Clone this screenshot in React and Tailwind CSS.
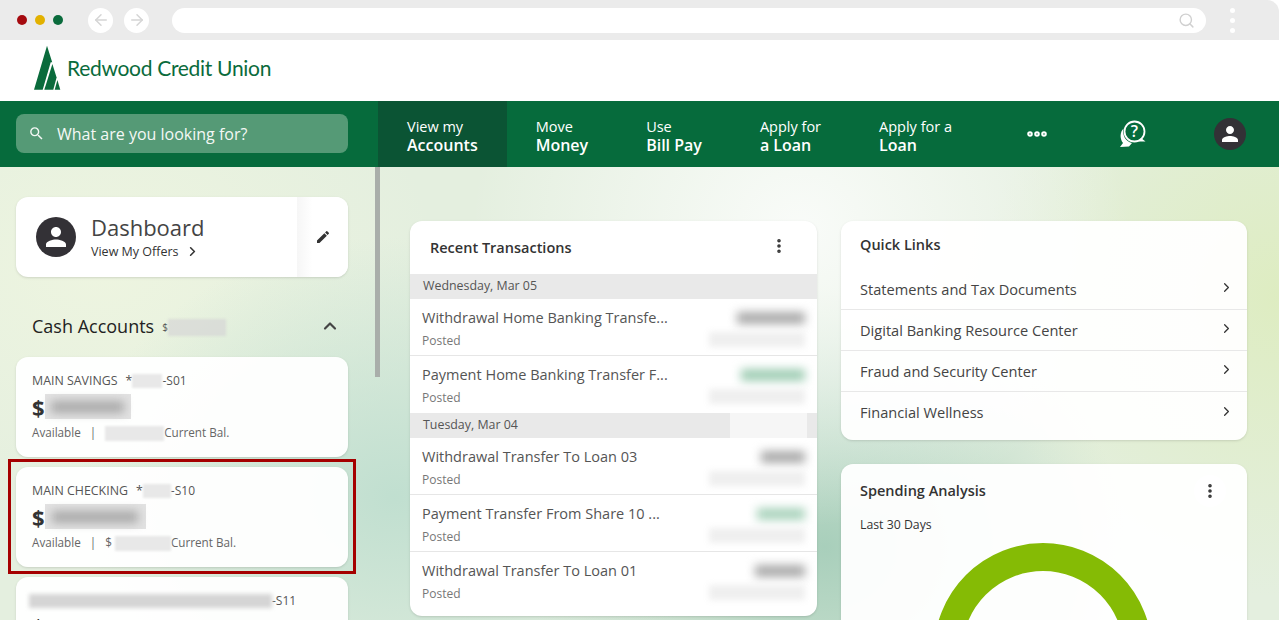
import { ArrowLeft, ArrowRight, ChevronRight, ChevronUp, EllipsisVertical, MoreHorizontal, Search } from "lucide-react";
import { MdPerson, MdSearch, MdEdit } from "react-icons/md";

const navItems = [
  { top: "View my", bottom: "Accounts", active: true },
  { top: "Move", bottom: "Money" },
  { top: "Use", bottom: "Bill Pay" },
  { top: "Apply for", bottom: "a Loan" },
  { top: "Apply for a", bottom: "Loan" },
];

const groups = [
  {
    date: "Wednesday, Mar 05",
    rows: [
      { name: "Withdrawal Home Banking Transfe...", w: "w-[68px]", color: "bg-[#aaaaaa]" },
      { name: "Payment Home Banking Transfer F...", w: "w-[64px]", color: "bg-[#9fcdb4]" },
    ],
  },
  {
    date: "Tuesday, Mar 04",
    rows: [
      { name: "Withdrawal Transfer To Loan 03", w: "w-[44px]", color: "bg-[#aaaaaa]" },
      { name: "Payment Transfer From Share 10 ...", w: "w-[48px]", color: "bg-[#a9d3bc]" },
      { name: "Withdrawal Transfer To Loan 01", w: "w-[50px]", color: "bg-[#aaaaaa]" },
    ],
  },
];

const quickLinks = [
  "Statements and Tax Documents",
  "Digital Banking Resource Center",
  "Fraud and Security Center",
  "Financial Wellness",
];

const Logo = () => (
  <svg width="28" height="46" viewBox="0 0 28 46" className="shrink-0">
    <path d="M14 0.7 L19.2 17.3 L17.7 17.3 L9.7 44.7 L1 44.7 Z" fill="#0a6b3c" />
    <path d="M11.3 44.7 L19.4 19 L23.6 32.5 L20.3 44.7 Z" fill="#0a6b3c" />
    <path d="M21.7 44.7 L24.4 35 L27.3 44.7 Z" fill="#0a6b3c" />
  </svg>
);

const HelpIcon = () => (
  <svg width="28" height="28" viewBox="0 0 28 28" fill="none">
    <circle cx="15.5" cy="11.5" r="10" stroke="white" strokeWidth="1.8" />
    <path d="M22 18 L26.5 21.5 L20 21.5 Z" fill="white" />
    <path d="M4.5 8.5 C3 15 6.5 21.5 13 23 L10 26.5 L1 27 L4 23 C0.5 18.5 1 12 4.5 8.5 Z" fill="white" />
    <text x="15.5" y="17" textAnchor="middle" fontSize="16" fontWeight="600" fill="white" fontFamily="Open Sans, sans-serif">?</text>
  </svg>
);

const AccountCard = ({ name, mask, suffix, amountW, dollar, curW, selected }) => (
  <div className={selected ? "-mx-2 border-[3px] border-[#a50000] px-[5px] pb-[4px] pt-[5px]" : ""}>
    <div className="h-[100px] rounded-xl bg-white/95 px-4 pt-4 shadow-sm">
      <div className="flex h-[16px] items-center text-[12.4px] leading-4 text-[#555]">
        <span>{name}</span>
        <span className="ml-[8px]">*</span>
        <div className={`h-[14px] ${mask} bg-[#e8e8e8] blur-[1px]`} />
        <span className="text-xs">-{suffix}</span>
      </div>
      <div className="mt-[5px] flex h-[25px] items-center">
        <span className="text-[22px] font-bold leading-6 text-[#333]">$</span>
        <div className={`flex h-[25px] ${amountW} items-center justify-center bg-[#e2e2e2]`}>
          <div className="h-[12px] w-[85%] bg-[#aaaaaa] blur-[5px]" />
        </div>
      </div>
      <div className="mt-[6px] flex h-[16px] items-center text-[11.7px] text-[#666]">
        <span>Available</span>
        <span className="mx-[9px]">|</span>
        {dollar && <span className="mr-[3px]">$</span>}
        <div className={`h-[15px] ${curW} bg-[#e8e8e8] blur-[1px]`} />
        <span>Current Bal.</span>
      </div>
    </div>
  </div>
);

const Kebab = ({ boxed }) => (
  <div className={`flex h-8 w-8 items-center justify-center rounded-full ${boxed ? "bg-white" : ""}`}>
    <EllipsisVertical size={18} strokeWidth={2.8} className="text-[#333]" />
  </div>
);

const App = () => {
  return (
    <div
      className="flex h-[620px] w-[1279px] flex-col overflow-hidden bg-white text-[#333]"
      style={{ fontFamily: '"Open Sans", sans-serif' }}
    >
      <div className="flex h-10 shrink-0 items-center rounded-tr-xl bg-[#ebebeb]">
        <div className="ml-[17px] flex gap-2">
          <span className="h-[10px] w-[10px] rounded-full bg-[#a50a0f]" />
          <span className="h-[10px] w-[10px] rounded-full bg-[#e2b100]" />
          <span className="h-[10px] w-[10px] rounded-full bg-[#0a6b3c]" />
        </div>
        <div className="ml-[25px] flex gap-[11px]">
          <div className="flex h-[25px] w-[25px] items-center justify-center rounded-full bg-white text-[#d5d5d5]">
            <ArrowLeft size={18} strokeWidth={2} />
          </div>
          <div className="flex h-[25px] w-[25px] items-center justify-center rounded-full bg-white text-[#d5d5d5]">
            <ArrowRight size={18} strokeWidth={2} />
          </div>
        </div>
        <div className="ml-[23px] flex h-[25px] w-[1034px] items-center justify-end rounded-full bg-white pr-[11px] text-[#d0d0d0]">
          <Search size={17} strokeWidth={2} />
        </div>
        <div className="ml-[24px] flex flex-col gap-[5px]">
          <span className="h-[5px] w-[5px] rounded-full bg-white" />
          <span className="h-[5px] w-[5px] rounded-full bg-white" />
          <span className="h-[5px] w-[5px] rounded-full bg-white" />
        </div>
      </div>

      <div className="flex h-[61px] shrink-0 items-center pb-[5px] pl-[33px]">
        <Logo />
        <span
          className="ml-[6px] text-[21px] leading-7 tracking-[-0.3px] text-[#0a6b3c]"
          style={{ fontFamily: "Lato, sans-serif" }}
        >
          Redwood Credit Union
        </span>
      </div>

      <div className="flex h-[66px] shrink-0 items-stretch bg-[#066b3c] text-white">
        <div className="flex w-[378px] shrink-0 items-center pb-[2px] pl-4">
          <div className="flex h-[39px] w-[332px] items-center rounded-lg bg-[#559a76] pl-[12px] text-[#f4f8f5]">
            <MdSearch size={17} />
            <span className="ml-[12px] pt-[1px] text-base">What are you looking for?</span>
          </div>
        </div>
        {navItems.map((item) => (
          <div
            key={item.bottom}
            className={`flex flex-col justify-center px-[29px] pt-[3px] ${item.active ? "bg-[#0b5434]" : ""}`}
          >
            <span className="text-[14.5px] leading-[18px]">{item.top}</span>
            <span className="text-base font-semibold leading-[18px]">{item.bottom}</span>
          </div>
        ))}
        <div className="ml-[14px] flex w-[84px] items-center justify-center">
          <MoreHorizontal size={24} strokeWidth={3.6} />
        </div>
        <div className="ml-[12px] flex w-[84px] items-center justify-center">
          <HelpIcon />
        </div>
        <div className="ml-[13px] flex w-[84px] items-center justify-center">
          <div className="flex h-8 w-8 items-center justify-center rounded-full bg-[#333136]">
            <MdPerson size={24} />
          </div>
        </div>
      </div>

      <div
        className="flex flex-1 overflow-hidden bg-[#e4efdf]"
        style={{
          backgroundImage:
            "radial-gradient(ellipse 330px 300px at 800px 60px, rgba(250,252,250,0.95), transparent), radial-gradient(ellipse 300px 300px at 1280px 130px, rgba(221,236,190,0.9), transparent), radial-gradient(ellipse 320px 260px at 395px 330px, rgba(186,220,205,0.85), transparent), radial-gradient(ellipse 300px 260px at 825px 380px, rgba(165,205,185,0.95), transparent), radial-gradient(ellipse 340px 260px at 100px 100px, rgba(238,245,224,0.95), transparent)",
        }}
      >
        <div className="relative w-[380px] shrink-0 pl-4 pr-8 pt-[30px]">
          <div className="absolute right-0 top-0 h-[210px] w-[5px] bg-[#a9aeaa]" />
          <div className="flex h-20 w-[332px] overflow-hidden rounded-xl bg-white shadow-sm">
            <div className="flex w-[281px] items-center pl-5">
              <div className="flex h-10 w-10 items-center justify-center rounded-full bg-[#333136] text-white">
                <MdPerson size={30} />
              </div>
              <div className="ml-[15px]">
                <div className="text-[22px] leading-[26px] text-[#444]">Dashboard</div>
                <div className="mt-[3px] flex items-center text-[12.5px] font-medium leading-[18px] text-[#333]">
                  View My Offers
                  <ChevronRight size={15} strokeWidth={2.5} className="ml-[6px]" />
                </div>
              </div>
            </div>
            <div className="flex flex-1 items-center justify-center bg-linear-to-r from-[#f6f6f6] to-white to-30% text-[#333]">
              <MdEdit size={16} />
            </div>
          </div>

          <div className="mt-[32px] flex h-[34px] items-center pl-4 pr-2">
            <span className="text-lg font-medium leading-6 text-[#222]">Cash Accounts</span>
            <span className="ml-2 mt-[3px] text-[10px] text-[#555]">$</span>
            <div className="mt-[2px] h-[17px] w-[58px] bg-[#d5d5d5]/70 blur-[1px]" />
            <ChevronUp size={20} strokeWidth={2.6} className="ml-auto text-[#444]" />
          </div>

          <div className="mt-[14px] flex flex-col">
            <AccountCard name="MAIN SAVINGS" mask="w-[30px]" suffix="S01" amountW="w-[86px]" curW="w-[59px]" />
            <div className="mt-[2px]">
              <AccountCard name="MAIN CHECKING" mask="w-[28px]" suffix="S10" amountW="w-[101px]" dollar curW="w-[56px]" selected />
            </div>
            <div className="mt-[3px] h-[100px] rounded-xl bg-white/95 pl-[13px] pt-[16px] shadow-sm">
              <div className="flex items-center text-xs text-[#555]">
                <div className="h-[14px] w-[243px] bg-[#d5d5d5] blur-[2px]" />
                <span>-S11</span>
              </div>
              <div className="mt-[5px] pl-[3px] text-[22px] font-bold leading-6 text-[#333]">$</div>
            </div>
          </div>
        </div>

        <div className="relative ml-[30px] mt-[54px] h-[395px] w-[407px] shrink-0 self-start overflow-hidden rounded-xl bg-white shadow-sm">
          <div className="absolute left-[320px] top-[85px] h-[300px] w-[77px] bg-white/60" />
          <div className="flex h-[53px] items-center justify-between pl-5 pr-[22px]">
            <span className="pt-[1px] text-[14.5px] font-semibold text-[#333]">Recent Transactions</span>
            <div className="mb-[3px]">
              <Kebab />
            </div>
          </div>
          {groups.map((group) => (
            <div key={group.date}>
              <div className="flex h-[25px] items-center bg-[#e9e9e9] pl-[13px] text-[12.4px] font-medium text-[#555]">
                {group.date}
              </div>
              {group.rows.map((row, i) => (
                <div
                  key={row.name}
                  className={`relative h-[57px] pl-3 pt-[8px] ${i < group.rows.length - 1 ? "border-b border-[#e6e6e6]" : ""}`}
                >
                  <div className="text-[14.5px] leading-[22px] text-[#555]">{row.name}</div>
                  <div className="mt-[4px] text-xs leading-4 text-[#777]">Posted</div>
                  <div className="absolute right-3 top-[8px] flex h-[22px] w-[76px] items-center justify-end bg-white">
                    <div className={`h-[12px] ${row.w} ${row.color} blur-[5px]`} />
                  </div>
                  <div className="absolute right-3 top-[33px] h-[15px] w-[96px] bg-[#efefef] blur-[3px]" />
                </div>
              ))}
            </div>
          ))}
        </div>

        <div className="ml-6 mt-[54px] flex w-[406px] shrink-0 flex-col gap-[24px] self-start">
          <div className="h-[219px] rounded-xl bg-white/95 shadow-sm">
            <div className="flex h-[48px] items-center pl-[19px] text-[14.5px] font-semibold text-[#333]">Quick Links</div>
            {quickLinks.map((link, i) => (
              <div
                key={link}
                className={`flex h-[41px] items-center justify-between pl-[19px] pr-[13px] pt-[1px] text-[14.6px] text-[#444] ${i < 3 ? "border-b border-[#e8e8e8]" : ""}`}
              >
                <span>{link}</span>
                <ChevronRight size={15} strokeWidth={2} className="mb-[4px] text-[#333]" />
              </div>
            ))}
          </div>

          <div className="h-[300px] rounded-xl bg-white/95 shadow-sm">
            <div className="flex h-[53px] items-center justify-between pl-[19px] pr-[21px]">
              <span className="pt-[1px] text-[14.5px] font-semibold text-[#333]">Spending Analysis</span>
              <Kebab boxed />
            </div>
            <div className="pl-[19px] text-[12.3px] leading-4 text-[#333]">Last 30 Days</div>
            <div className="mt-[10px] flex justify-center">
              <svg width="218" height="218" viewBox="0 0 218 218" className="ml-[-2px]">
                <circle cx="109" cy="109" r="95" fill="none" stroke="#85bb05" strokeWidth="28" />
              </svg>
            </div>
          </div>
        </div>
      </div>
    </div>
  );
};

export default App;
